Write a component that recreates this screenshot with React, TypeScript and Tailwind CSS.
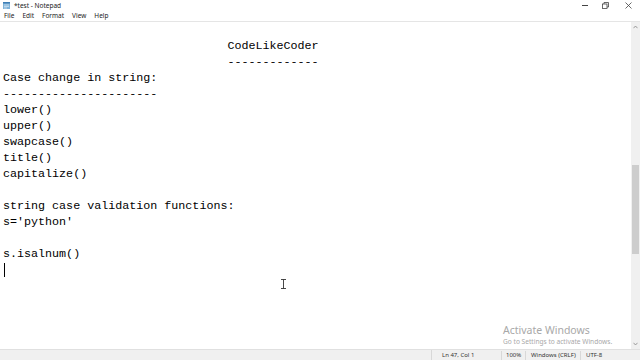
import type { JSX } from "react";

const lines = [
  "",
  "                                CodeLikeCoder",
  "                                -------------",
  "Case change in string:",
  "----------------------",
  "lower()",
  "upper()",
  "swapcase()",
  "title()",
  "capitalize()",
  "",
  "string case validation functions:",
  "s='python'",
  "",
  "s.isalnum()",
];

function NotepadIcon(): JSX.Element {
  return (
    <svg width="9" height="9" viewBox="0 0 9 9">
      <rect x="1" y="1" width="7" height="7" fill="#7fb2d9" />
      <rect x="1" y="1" width="7" height="1.5" fill="#3f7fb5" />
      <path d="M2 4h5M2 5.5h5M2 7h3" stroke="#e8f1f8" strokeWidth="0.6" />
    </svg>
  );
}

export default function App(): JSX.Element {
  return (
    <div className="flex h-[360px] w-[640px] flex-col overflow-hidden bg-white font-['Segoe_UI','Noto_Sans',sans-serif] text-black">
      {/* title bar */}
      <div className="flex h-[11px] items-center">
        <div className="flex items-center gap-[3px] pl-[2px] text-[6.5px] text-[#222]">
          <NotepadIcon />
          <span>*test - Notepad</span>
        </div>
        <div className="ml-auto flex h-full items-center text-[#333]">
          <div className="flex w-[21px] justify-center">
            <div className="h-px w-[6px] bg-[#444]" />
          </div>
          <div className="flex w-[21px] justify-center">
            <svg width="7" height="7" viewBox="0 0 7 7" fill="none" stroke="#444" strokeWidth="0.8">
              <rect x="0.5" y="2" width="4.5" height="4.5" />
              <path d="M2 2V0.5h4.5V5H5" />
            </svg>
          </div>
          <div className="flex w-[24px] justify-center">
            <svg width="7" height="7" viewBox="0 0 7 7" stroke="#444" strokeWidth="0.8">
              <path d="M0.5 0.5l6 6M6.5 0.5l-6 6" />
            </svg>
          </div>
        </div>
      </div>

      {/* menu bar */}
      <div className="flex h-[10px] items-center gap-[8px] pl-[4px] text-[6.5px] text-[#222]">
        <span>File</span>
        <span>Edit</span>
        <span>Format</span>
        <span>View</span>
        <span>Help</span>
      </div>

      {/* editor */}
      <div className="flex min-h-0 flex-1 border-t border-[#e5e5e5]">
        <div className="relative flex-1 overflow-hidden pl-[3px] font-['Liberation_Mono',monospace] text-[11.7px] leading-[16px]">
          {lines.map((l, i) => (
            <div key={i} className="h-[16px] whitespace-pre">
              {l}
            </div>
          ))}
          <div className="h-[16px]">
            <div className="ml-[1px] mt-[1px] h-[14px] w-px bg-black" />
          </div>

          {/* mouse I-beam */}
          <div className="absolute left-[280px] top-[257px]">
            <svg width="7" height="10" viewBox="0 0 7 10" fill="none" stroke="#333" strokeWidth="0.9">
              <path d="M1 0.5h5M1 9.5h5M3.5 0.5v9" />
            </svg>
          </div>

          {/* watermark */}
          <div className="absolute left-[503px] top-[302px] whitespace-nowrap font-['Segoe_UI','Noto_Sans',sans-serif] text-[#a8a8a8]">
            <div className="text-[10.5px] leading-[13px]">Activate Windows</div>
            <div className="text-[6.6px] leading-[10px]">Go to Settings to activate Windows.</div>
          </div>
        </div>

        {/* scrollbar */}
        <div className="flex w-[9px] flex-col bg-[#f0f0f0]">
          <div className="flex h-[10px] items-center justify-center">
            <svg width="5" height="4" viewBox="0 0 5 4">
              <path d="M0.5 3.2L2.5 1L4.5 3.2" fill="none" stroke="#888" strokeWidth="0.8" />
            </svg>
          </div>
          <div className="flex flex-1 flex-col pt-[133px]">
            <div className="mx-auto h-[89px] w-[7px] bg-[#cdcdcd]" />
          </div>
          <div className="flex h-[10px] items-center justify-center">
            <svg width="5" height="4" viewBox="0 0 5 4">
              <path d="M0.5 0.8L2.5 3L4.5 0.8" fill="none" stroke="#888" strokeWidth="0.8" />
            </svg>
          </div>
        </div>
      </div>

      {/* status bar */}
      <div className="flex h-[11px] items-center whitespace-nowrap border-t border-[#e0e0e0] bg-[#f0f0f0] text-[6px] text-[#333]">
        <div className="h-full w-[432px] border-r border-[#d8d8d8]" />
        <div className="w-[70px] border-r border-[#d8d8d8] pl-[10px]">Ln 47, Col 1</div>
        <div className="w-[24px] border-r border-[#d8d8d8] pl-[4px]">100%</div>
        <div className="w-[55px] border-r border-[#d8d8d8] pl-[5px]">Windows (CRLF)</div>
        <div className="pl-[5px]">UTF-8</div>
      </div>
    </div>
  );
}
